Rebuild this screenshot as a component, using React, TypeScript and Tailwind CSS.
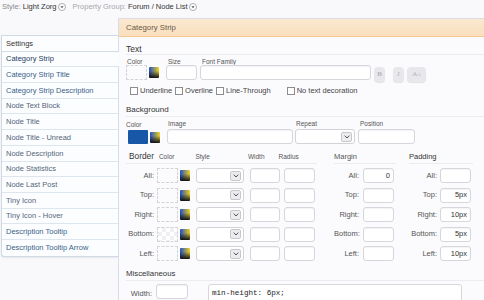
import React from 'react';

const items: { label: string; tone: 'sel' | 'custom' | 'plain' }[] = [
  { label: 'Category Strip', tone: 'sel' },
  { label: 'Category Strip Title', tone: 'custom' },
  { label: 'Category Strip Description', tone: 'custom' },
  { label: 'Node Text Block', tone: 'plain' },
  { label: 'Node Title', tone: 'plain' },
  { label: 'Node Title - Unread', tone: 'plain' },
  { label: 'Node Description', tone: 'plain' },
  { label: 'Node Statistics', tone: 'plain' },
  { label: 'Node Last Post', tone: 'plain' },
  { label: 'Tiny Icon', tone: 'plain' },
  { label: 'Tiny Icon - Hover', tone: 'plain' },
  { label: 'Description Tooltip', tone: 'custom' },
  { label: 'Description Tooltip Arrow', tone: 'custom' },
];

function DropCircle() {
  return (
    <svg width="8" height="8" viewBox="0 0 8 8" className="ml-[1px]">
      <circle cx="4" cy="4" r="3.5" fill="#fff" stroke="#9a9aa0" strokeWidth="0.8" />
      <path d="M2.4 3.2 L5.6 3.2 L4 5.2 Z" fill="#555" />
    </svg>
  );
}

function Field({ className = '', value }: { className?: string; value?: string }) {
  return (
    <div
      className={`flex h-[15px] items-center justify-end rounded-[3px] border border-[#d6d6dc] bg-white pr-[3px] text-[7.5px] leading-none text-[#333] shadow-[inset_0_1px_1px_rgba(0,0,0,0.05)] ${className}`}
    >
      {value}
    </div>
  );
}

function Select({ className = '' }: { className?: string }) {
  return (
    <div className={`flex h-[15px] items-center justify-end rounded-[3px] border border-[#d2d2d8] bg-white pr-[2px] ${className}`}>
      <div className="flex h-[10px] w-[11px] items-center justify-center rounded-[2px] border border-[#c6c6cc] bg-[#ececef]">
        <svg width="6" height="4" viewBox="0 0 6 4">
          <path d="M0.7 0.6 L3 3 L5.3 0.6" fill="none" stroke="#555" strokeWidth="1" />
        </svg>
      </div>
    </div>
  );
}

function Swatch({ className = '' }: { className?: string }) {
  return <div className={`h-[15px] w-[21px] border border-dashed border-[#d3d3d8] ${className}`} />;
}

function Picker() {
  return (
    <div className="h-[11px] w-[10px] rounded-[1px] bg-[linear-gradient(to_bottom,rgba(0,0,0,0)_35%,#111),linear-gradient(to_right,#1f4fc4,#f2d21a)]" />
  );
}

function Check({ label, className = '' }: { label: string; className?: string }) {
  return (
    <div className={`flex items-center gap-[2px] ${className}`}>
      <div className="h-[8px] w-[8px] border border-[#8c8c92] bg-white" />
      <span>{label}</span>
    </div>
  );
}

function Label({ children, className = '' }: { children: React.ReactNode; className?: string }) {
  return <div className={`h-[7px] text-[6.5px] leading-[7px] text-[#555] ${className}`}>{children}</div>;
}

const rowLabels = ['All:', 'Top:', 'Right:', 'Bottom:', 'Left:'];
const padding = ['', '5px', '10px', '5px', '10px'];

export default function App() {
  return (
    <div className="flex h-[300px] w-[484px] flex-col overflow-hidden bg-[#f9f9fc] font-['Liberation_Sans',Arial,sans-serif] text-[7.5px] text-[#333]">
      {/* top bar */}
      <div className="flex h-[18px] shrink-0 items-start pl-[2px] pt-[3px] leading-[8px]">
        <span className="text-[#8a8a90]">Style:</span>
        <span className="ml-[2px] text-[#333]">Light Zorg</span>
        <DropCircle />
        <span className="ml-[7px] text-[#a8a8ae]">Property Group:</span>
        <span className="ml-[2px] text-[#333]">Forum / Node List</span>
        <DropCircle />
      </div>

      <div className="flex flex-1">
        {/* sidebar */}
        <div className="w-[118px] shrink-0 pl-[1px] pt-[17px]">
          <div className="rounded-bl-[3px] border-b border-l border-t border-[#cfdae6] bg-[#fcfdff] shadow-[0_1px_2px_rgba(0,0,0,0.08)]">
            <div className="flex h-[15.7px] items-center border-b border-[#d3dde8] pl-[4px] text-[#333]">Settings</div>
            {items.map((it) => (
              <div
                key={it.label}
                className={`flex h-[15.7px] items-center border-b border-[#dde5ee] pl-[4px] last:border-b-0 ${
                  it.tone === 'sel'
                    ? 'relative z-10 -mr-px bg-[#fcfdff] text-[#23415e]'
                    : it.tone === 'custom'
                    ? 'text-[#3a6288]'
                    : 'text-[#55667a]'
                }`}
              >
                {it.label}
              </div>
            ))}
          </div>
        </div>

        {/* main panel */}
        <div className="flex flex-1 flex-col border-l border-[#d6dee8] bg-[#fbfbfe]">
          <div className="flex h-[19px] shrink-0 items-center border-b border-t border-b-[#f6c78e] border-t-[#dcdce2] bg-[linear-gradient(to_bottom,#fae8d0,#f9dfbd)] pl-[7px] text-[7.8px] text-[#6a5a48]">
            Category Strip
          </div>

          <div className="pl-[7px]">
            {/* Text */}
            <div className="mt-[7px] h-[11px] border-b border-[#ebebf0] text-[8.5px] leading-[10px] text-[#333]">Text</div>
            <div className="mt-[3px] flex items-end">
              <div className="flex flex-col">
                <Label className="pl-[1px]">Color</Label>
                <div className="flex items-center gap-[2px]">
                  <Swatch />
                  <Picker />
                </div>
              </div>
              <div className="ml-[7px] flex flex-col">
                <Label className="pl-[2px]">Size</Label>
                <Field className="w-[31px]" />
              </div>
              <div className="ml-[3px] flex flex-col">
                <Label className="pl-[2px]">Font Family</Label>
                <Field className="w-[171px]" />
              </div>
              <div className="mb-[-2px] ml-[3px] flex items-center text-[7px] text-[#b4b4bc]">
                <div className="flex h-[15px] w-[11px] items-center justify-center rounded-[4px] bg-[#e7e7ec] font-['Liberation_Serif',serif] font-bold shadow-[0_1px_1px_rgba(0,0,0,0.1)]">B</div>
                <div className="ml-[8px] flex h-[15px] w-[11px] items-center justify-center rounded-[4px] bg-[#e7e7ec] font-['Liberation_Serif',serif] italic shadow-[0_1px_1px_rgba(0,0,0,0.1)]">I</div>
                <div className="ml-[3px] flex h-[15px] w-[19px] items-center justify-center rounded-[4px] bg-[#e7e7ec] font-['Liberation_Serif',serif] shadow-[0_1px_1px_rgba(0,0,0,0.1)]">
                  A<span className="text-[5px]">A</span>
                </div>
              </div>
            </div>
            <div className="mt-[6px] flex h-[9px] items-center text-[7.5px] text-[#444]">
              <Check label="Underline" className="ml-[4px]" />
              <Check label="Overline" className="ml-[3px]" />
              <Check label="Line-Through" className="ml-[3px]" />
              <Check label="No text decoration" className="ml-[16px]" />
            </div>

            {/* Background */}
            <div className="mt-[10px] h-[12px] border-b border-[#ebebf0] text-[8px] leading-[10px] text-[#333]">Background</div>
            <div className="mt-[3px] flex items-end">
              <div className="flex flex-col">
                <Label>Color</Label>
                <div className="mt-[2px] flex items-center gap-[2px] pl-[2px]">
                  <div className="h-[14px] w-[20px] rounded-[1px] bg-[#1757a8]" />
                  <Picker />
                </div>
              </div>
              <div className="ml-[7px] flex flex-col">
                <Label className="pl-[1px]">Image</Label>
                <Field className="mt-[2px] w-[126px]" />
              </div>
              <div className="ml-[2px] flex flex-col">
                <Label className="pl-[1px]">Repeat</Label>
                <Select className="mt-[2px] w-[60px]" />
              </div>
              <div className="ml-[3px] flex flex-col">
                <Label className="pl-[2px]">Position</Label>
                <Field className="mt-[2px] w-[57px]" />
              </div>
            </div>

            {/* Border / Margin / Padding */}
            <div className="mt-[8px] flex">
              <div className="flex flex-col">
                <div className="flex h-[12px] w-[191px] items-end border-b border-[#ebebf0] pb-[1px] text-[6.5px] text-[#555]">
                  <span className="ml-[3px] text-[8.3px] text-[#333]">Border</span>
                  <span className="ml-[5px]">Color</span>
                  <span className="ml-[21px]">Style</span>
                  <span className="ml-[38px]">Width</span>
                  <span className="ml-[14px]">Radius</span>
                </div>
                <div className="mt-[4px] flex flex-col gap-[4.5px]">
                  {rowLabels.map((l, i) => (
                    <div key={l} className="flex items-center">
                      <div className="w-[28px] text-right text-[#555]">{l}</div>
                      <Swatch
                        className={`ml-[3px] ${i === 3 ? 'bg-[conic-gradient(#f0f0f2_25%,#fff_0_50%,#f0f0f2_0_75%,#fff_0)] bg-[length:8px_8px]' : ''}`}
                      />
                      <div className="ml-[2px]">
                        <Picker />
                      </div>
                      <Select className="ml-[6px] w-[48px]" />
                      <Field className="ml-[6px] w-[30px]" />
                      <Field className="ml-[4px] w-[31px]" />
                    </div>
                  ))}
                </div>
              </div>

              <div className="ml-[17px] flex flex-col">
                <div className="flex h-[12px] w-[62px] items-end border-b border-[#ebebf0] pb-[1px] text-[#555]">Margin</div>
                <div className="mt-[4px] flex flex-col gap-[4.5px]">
                  {rowLabels.map((l, i) => (
                    <div key={l} className="flex items-center">
                      <div className="w-[25px] text-right text-[#555]">{l}</div>
                      <Field className="ml-[4px] w-[31px]" value={i === 0 ? '0' : ''} />
                    </div>
                  ))}
                </div>
              </div>

              <div className="ml-[13px] flex flex-col">
                <div className="flex h-[12px] w-[64px] items-end border-b border-[#ebebf0] pb-[1px] text-[#333]">Padding</div>
                <div className="mt-[4px] flex flex-col gap-[4.5px]">
                  {rowLabels.map((l, i) => (
                    <div key={l} className="flex items-center">
                      <div className="w-[28px] text-right text-[#555]">{l}</div>
                      <Field className="ml-[3px] w-[31px]" value={padding[i]} />
                    </div>
                  ))}
                </div>
              </div>
            </div>

            {/* Miscellaneous */}
            <div className="mt-[8px] h-[12px] border-b border-[#ebebf0] text-[7.8px] leading-[10px] text-[#333]">Miscellaneous</div>
            <div className="mt-[3px] flex items-start">
              <div className="mt-[4px] w-[26px] text-right text-[#555]">Width:</div>
              <Field className="ml-[4px] w-[32px]" />
              <div className="ml-[20px] h-[30px] w-[254px] rounded-[3px] border border-[#d6d6dc] bg-white pl-[3px] pt-[4px] font-['Liberation_Mono',monospace] text-[7.6px] leading-[9px] text-[#222]">
                min-height: 6px;
              </div>
            </div>
          </div>
        </div>
      </div>
    </div>
  );
}
